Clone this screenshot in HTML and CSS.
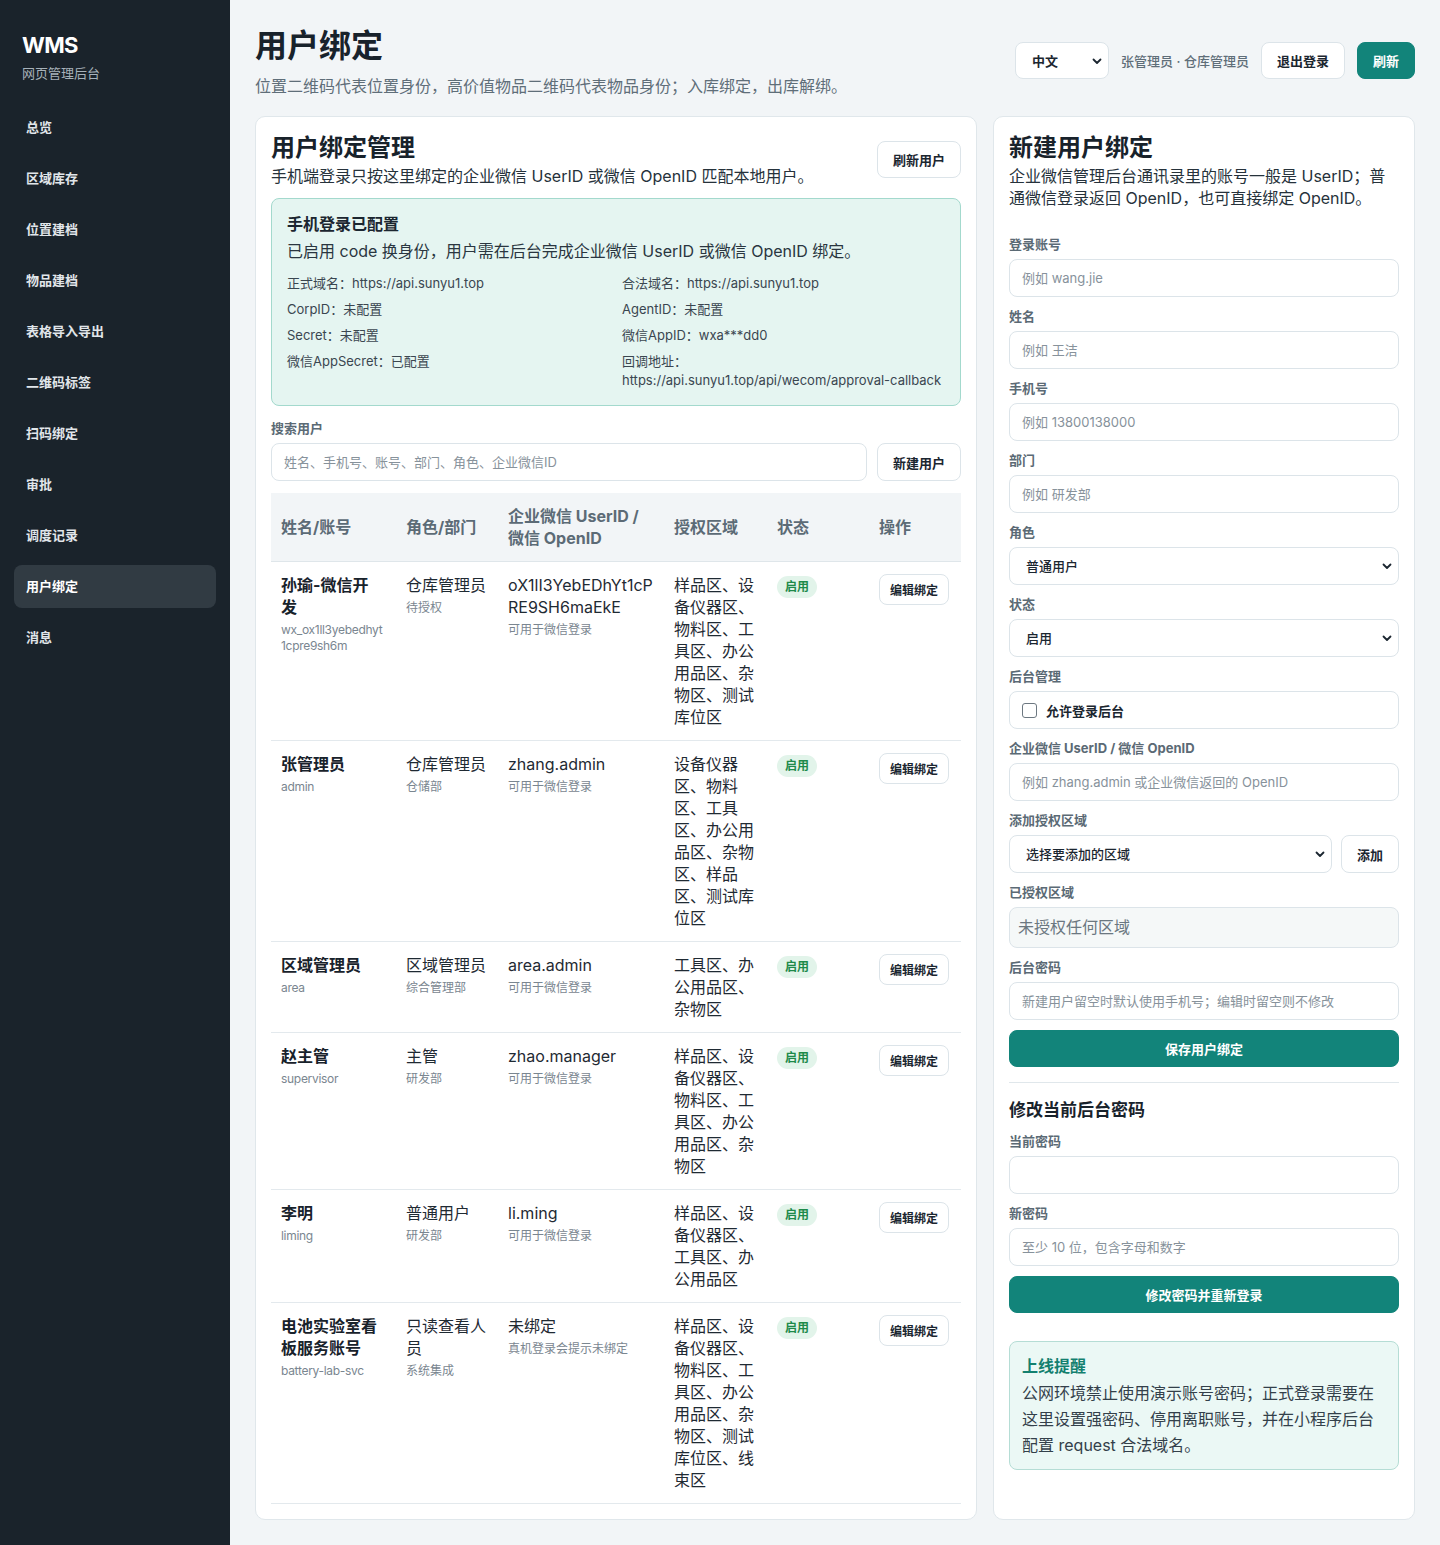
FILE: index.html
```html
<!DOCTYPE html>
<html lang="zh-CN">
<head>
<meta charset="utf-8">
<title>WMS 用户绑定</title>
<link rel="stylesheet" href="styles.css">
</head>
<body>
<div class="layout">
  <aside class="sidebar">
    <div class="brand">
      <div class="brand-name">WMS</div>
      <div class="brand-sub">网页管理后台</div>
    </div>
    <nav class="nav">
      <a class="nav-item">总览</a>
      <a class="nav-item">区域库存</a>
      <a class="nav-item">位置建档</a>
      <a class="nav-item">物品建档</a>
      <a class="nav-item">表格导入导出</a>
      <a class="nav-item">二维码标签</a>
      <a class="nav-item">扫码绑定</a>
      <a class="nav-item">审批</a>
      <a class="nav-item">调度记录</a>
      <a class="nav-item active">用户绑定</a>
      <a class="nav-item">消息</a>
    </nav>
  </aside>

  <main class="main">
    <header class="topbar">
      <div class="page-head">
        <h1>用户绑定</h1>
        <p>位置二维码代表位置身份，高价值物品二维码代表物品身份；入库绑定，出库解绑。</p>
      </div>
      <div class="top-actions">
        <div class="select select-lang">
          <select><option>中文</option></select>
          <svg class="chev" width="12" height="12" viewBox="0 0 12 12"><path d="M2.5 4.5 6 8l3.5-3.5" fill="none" stroke="#1b2630" stroke-width="1.8" stroke-linecap="round" stroke-linejoin="round"/></svg>
        </div>
        <span class="who">张管理员 · 仓库管理员</span>
        <button class="btn">退出登录</button>
        <button class="btn btn-primary">刷新</button>
      </div>
    </header>

    <div class="content">
      <section class="card">
        <div class="card-head">
          <div>
            <h2 class="card-title">用户绑定管理</h2>
            <p class="card-desc">手机端登录只按这里绑定的企业微信 UserID 或微信 OpenID 匹配本地用户。</p>
          </div>
          <button class="btn">刷新用户</button>
        </div>

        <div class="notice">
          <div class="notice-title">手机登录已配置</div>
          <div class="notice-desc">已启用 code 换身份，用户需在后台完成企业微信 UserID 或微信 OpenID 绑定。</div>
          <div class="notice-grid">
            <div>正式域名：https://api.sunyu1.top</div>
            <div>合法域名：https://api.sunyu1.top</div>
            <div>CorpID：未配置</div>
            <div>AgentID：未配置</div>
            <div>Secret：未配置</div>
            <div>微信AppID：wxa***dd0</div>
            <div>微信AppSecret：已配置</div>
            <div>回调地址：<span class="url">https://api.sunyu1.top/api/wecom/approval-callback</span></div>
          </div>
        </div>

        <div class="search">
          <label class="field-label">搜索用户</label>
          <div class="search-row">
            <input class="input" placeholder="姓名、手机号、账号、部门、角色、企业微信ID">
            <button class="btn btn-field">新建用户</button>
          </div>
        </div>

        <table class="table">
          <colgroup>
            <col style="width:125px"><col style="width:102px"><col style="width:166px"><col style="width:103px"><col style="width:102px"><col style="width:92px">
          </colgroup>
          <thead>
            <tr>
              <th>姓名/账号</th>
              <th>角色/部门</th>
              <th>企业微信 UserID / 微信 OpenID</th>
              <th>授权区域</th>
              <th>状态</th>
              <th>操作</th>
            </tr>
          </thead>
          <tbody>
            <tr>
              <td><div class="name">孙瑜-微信开发</div><div class="sub break">wx_ox1ll3yebedhyt1cpre9sh6m</div></td>
              <td><div>仓库管理员</div><div class="sub">待授权</div></td>
              <td><div class="break">oX1lI3YebEDhYt1cPRE9SH6maEkE</div><div class="sub">可用于微信登录</div></td>
              <td>样品区、设备仪器区、物料区、工具区、办公用品区、杂物区、测试库位区</td>
              <td><span class="badge">启用</span></td>
              <td><button class="btn btn-sm">编辑绑定</button></td>
            </tr>
            <tr>
              <td><div class="name">张管理员</div><div class="sub">admin</div></td>
              <td><div>仓库管理员</div><div class="sub">仓储部</div></td>
              <td><div>zhang.admin</div><div class="sub">可用于微信登录</div></td>
              <td>设备仪器区、物料区、工具区、办公用品区、杂物区、样品区、测试库位区</td>
              <td><span class="badge">启用</span></td>
              <td><button class="btn btn-sm">编辑绑定</button></td>
            </tr>
            <tr>
              <td><div class="name">区域管理员</div><div class="sub">area</div></td>
              <td><div>区域管理员</div><div class="sub">综合管理部</div></td>
              <td><div>area.admin</div><div class="sub">可用于微信登录</div></td>
              <td>工具区、办公用品区、杂物区</td>
              <td><span class="badge">启用</span></td>
              <td><button class="btn btn-sm">编辑绑定</button></td>
            </tr>
            <tr>
              <td><div class="name">赵主管</div><div class="sub">supervisor</div></td>
              <td><div>主管</div><div class="sub">研发部</div></td>
              <td><div>zhao.manager</div><div class="sub">可用于微信登录</div></td>
              <td>样品区、设备仪器区、物料区、工具区、办公用品区、杂物区</td>
              <td><span class="badge">启用</span></td>
              <td><button class="btn btn-sm">编辑绑定</button></td>
            </tr>
            <tr>
              <td><div class="name">李明</div><div class="sub">liming</div></td>
              <td><div>普通用户</div><div class="sub">研发部</div></td>
              <td><div>li.ming</div><div class="sub">可用于微信登录</div></td>
              <td>样品区、设备仪器区、工具区、办公用品区</td>
              <td><span class="badge">启用</span></td>
              <td><button class="btn btn-sm">编辑绑定</button></td>
            </tr>
            <tr>
              <td><div class="name">电池实验室看板服务账号</div><div class="sub">battery-lab-svc</div></td>
              <td><div>只读查看人员</div><div class="sub">系统集成</div></td>
              <td><div>未绑定</div><div class="sub">真机登录会提示未绑定</div></td>
              <td>样品区、设备仪器区、物料区、工具区、办公用品区、杂物区、测试库位区、线束区</td>
              <td><span class="badge">启用</span></td>
              <td><button class="btn btn-sm">编辑绑定</button></td>
            </tr>
          </tbody>
        </table>
      </section>

      <section class="card form-card">
        <h2 class="card-title">新建用户绑定</h2>
        <p class="card-desc">企业微信管理后台通讯录里的账号一般是 UserID；普通微信登录返回 OpenID，也可直接绑定 OpenID。</p>

        <div class="form">
          <div class="field">
            <label class="field-label">登录账号</label>
            <input class="input" placeholder="例如 wang.jie">
          </div>
          <div class="field">
            <label class="field-label">姓名</label>
            <input class="input" placeholder="例如 王洁">
          </div>
          <div class="field">
            <label class="field-label">手机号</label>
            <input class="input" placeholder="例如 13800138000">
          </div>
          <div class="field">
            <label class="field-label">部门</label>
            <input class="input" placeholder="例如 研发部">
          </div>
          <div class="field">
            <label class="field-label">角色</label>
            <div class="select">
              <select><option>普通用户</option></select>
              <svg class="chev" width="12" height="12" viewBox="0 0 12 12"><path d="M2.5 4.5 6 8l3.5-3.5" fill="none" stroke="#1b2630" stroke-width="1.8" stroke-linecap="round" stroke-linejoin="round"/></svg>
            </div>
          </div>
          <div class="field">
            <label class="field-label">状态</label>
            <div class="select">
              <select><option>启用</option></select>
              <svg class="chev" width="12" height="12" viewBox="0 0 12 12"><path d="M2.5 4.5 6 8l3.5-3.5" fill="none" stroke="#1b2630" stroke-width="1.8" stroke-linecap="round" stroke-linejoin="round"/></svg>
            </div>
          </div>
          <div class="field">
            <label class="field-label">后台管理</label>
            <label class="check-box"><input type="checkbox" class="check"><span>允许登录后台</span></label>
          </div>
          <div class="field">
            <label class="field-label">企业微信 UserID / 微信 OpenID</label>
            <input class="input" placeholder="例如 zhang.admin 或企业微信返回的 OpenID">
          </div>
          <div class="field">
            <label class="field-label">添加授权区域</label>
            <div class="area-row">
              <div class="select">
                <select><option>选择要添加的区域</option></select>
                <svg class="chev" width="12" height="12" viewBox="0 0 12 12"><path d="M2.5 4.5 6 8l3.5-3.5" fill="none" stroke="#1b2630" stroke-width="1.8" stroke-linecap="round" stroke-linejoin="round"/></svg>
              </div>
              <button class="btn btn-field">添加</button>
            </div>
          </div>
          <div class="field">
            <label class="field-label">已授权区域</label>
            <div class="area-box">未授权任何区域</div>
          </div>
          <div class="field">
            <label class="field-label">后台密码</label>
            <input class="input" placeholder="新建用户留空时默认使用手机号；编辑时留空则不修改">
          </div>
          <button class="btn btn-primary btn-block">保存用户绑定</button>
        </div>

        <hr class="divider">

        <h3 class="sub-title">修改当前后台密码</h3>
        <div class="form form-tight">
          <div class="field">
            <label class="field-label">当前密码</label>
            <input class="input" type="password">
          </div>
          <div class="field">
            <label class="field-label">新密码</label>
            <input class="input" placeholder="至少 10 位，包含字母和数字">
          </div>
          <button class="btn btn-primary btn-block">修改密码并重新登录</button>
        </div>

        <div class="tip">
          <div class="tip-title">上线提醒</div>
          <p class="tip-text">公网环境禁止使用演示账号密码；正式登录需要在这里设置强密码、停用离职账号，并在小程序后台配置 request 合法域名。</p>
        </div>
      </section>
    </div>
  </main>
</div>
</body>
</html>
```

FILE: styles.css
```css
* { box-sizing: border-box; }
html, body { margin: 0; padding: 0; }
body {
  font-family: "Inter", "Noto Sans CJK SC", sans-serif;
  color: #1b2630;
  background: #f2f5f7;
}
.layout {
  display: grid;
  grid-template-columns: 230px 1fr;
  min-height: 100vh;
}

/* Sidebar */
.sidebar {
  background: #1a232b;
  padding: 30px 14px;
}
.brand { padding-left: 8px; margin-bottom: 24px; }
.brand-name {
  color: #ffffff;
  font-size: 22px;
  line-height: 30px;
  font-weight: 700;
  letter-spacing: -0.6px;
}
.brand-sub {
  color: #a7b2ba;
  font-size: 13px;
  line-height: 18px;
  margin-top: 4px;
}
.nav { display: flex; flex-direction: column; gap: 8px; }
.nav-item {
  display: block;
  height: 43px;
  line-height: 43px;
  padding: 0 12px;
  border-radius: 8px;
  color: #e1e6ea;
  font-size: 13px;
  font-weight: 700;
  text-decoration: none;
}
.nav-item.active { background: #313b43; color: #ffffff; }

/* Main */
.main { padding: 24px 25px 25px; min-width: 0; }
.topbar {
  display: flex;
  align-items: center;
  justify-content: space-between;
  margin-bottom: 19px;
}
.page-head h1 {
  margin: 0;
  font-size: 32px;
  line-height: 44px;
  font-weight: 700;
  color: #18222b;
}
.page-head p {
  margin: 7px 0 0;
  font-size: 16px;
  line-height: 22px;
  color: #5f6e79;
}
.top-actions { display: flex; align-items: center; gap: 12px; }
.who { font-size: 13px; color: #5f6e79; font-weight: 500; }

.btn {
  height: 37px;
  padding: 0 15px;
  border: 1px solid #dce4e9;
  border-radius: 8px;
  background: #ffffff;
  font-family: inherit;
  font-size: 13px;
  font-weight: 700;
  color: #1b2630;
  white-space: nowrap;
}
.btn-primary { background: #12847a; border-color: #12847a; color: #ffffff; }
.btn-field { height: 38px; flex: 0 0 auto; }
.btn-block { width: 100%; }
.btn-sm { height: 31px; padding: 0 10px; font-size: 12px; }

/* Select */
.select { position: relative; flex: 1 1 auto; }
.select select {
  appearance: none;
  -webkit-appearance: none;
  width: 100%;
  height: 38px;
  border: 1px solid #dce4e9;
  border-radius: 8px;
  background: #ffffff;
  padding: 0 30px 0 16px;
  font-family: inherit;
  font-size: 13px;
  font-weight: 500;
  color: #1b2630;
}
.select .chev { position: absolute; right: 6px; top: 13px; pointer-events: none; }
.select-lang { flex: 0 0 94px; }
.select-lang select { height: 37px; font-weight: 700; }

/* Cards */
.content {
  display: grid;
  grid-template-columns: minmax(0, 1fr) 422px;
  gap: 16px;
  align-items: stretch;
}
.card {
  background: #ffffff;
  border: 1px solid #e0e7eb;
  border-radius: 10px;
  padding: 15px;
  min-width: 0;
}
.card-head {
  display: flex;
  align-items: center;
  justify-content: space-between;
  gap: 16px;
}
.card-title {
  margin: 0;
  font-size: 24px;
  line-height: 32px;
  font-weight: 700;
  color: #18222b;
}
.card-desc {
  margin: 1px 0 0;
  font-size: 16px;
  line-height: 22px;
  color: #26323b;
}

/* Notice */
.notice {
  margin-top: 11px;
  background: #e5f5f1;
  border: 1px solid #a3d9cd;
  border-radius: 8px;
  padding: 14px 15px 15px;
}
.notice-title { font-size: 16px; line-height: 22px; font-weight: 700; }
.notice-desc { margin-top: 5px; font-size: 16px; line-height: 22px; color: #2a3640; }
.notice-grid {
  margin-top: 12px;
  display: grid;
  grid-template-columns: 1fr 1fr;
  column-gap: 12px;
  row-gap: 7px;
  font-size: 13px;
  line-height: 19px;
  color: #3a4650;
}
.url { display: block; white-space: nowrap; }

/* Search */
.search { margin-top: 13px; }
.field-label {
  display: block;
  font-size: 13px;
  line-height: 18px;
  font-weight: 700;
  color: #5b6a75;
  margin-bottom: 6px;
}
.search-row { display: flex; gap: 10px; }
.input {
  display: block;
  width: 100%;
  height: 38px;
  border: 1px solid #dce4e9;
  border-radius: 8px;
  padding: 0 12px;
  background: #ffffff;
  font-family: inherit;
  font-size: 13px;
  color: #1b2630;
}
.input::placeholder { color: #87929b; }

/* Table */
.table {
  width: 100%;
  margin-top: 12px;
  border-collapse: collapse;
  table-layout: fixed;
}
.table th {
  background: #f2f5f7;
  text-align: left;
  font-size: 16px;
  line-height: 22px;
  font-weight: 700;
  color: #5c6b76;
  padding: 12px 10px;
  vertical-align: middle;
  border-bottom: 1px solid #dfe6ea;
}
.table td {
  padding: 12px 10px;
  vertical-align: top;
  border-bottom: 1px solid #e3e9ed;
  font-size: 16px;
  line-height: 22px;
  color: #1f2a33;
  overflow-wrap: anywhere;
}
.table td:first-child { padding-right: 13px; }
.name { font-weight: 700; color: #18222b; }
.sub {
  margin-top: 4px;
  font-size: 12px;
  line-height: 16px;
  color: #7a8690;
}
.break { word-break: break-all; }
.table td:first-child .sub { letter-spacing: -0.3px; }
.badge {
  display: inline-block;
  height: 22px;
  line-height: 22px;
  padding: 0 8px;
  border-radius: 11px;
  background: #e2f4ea;
  color: #1e8a4a;
  font-size: 12px;
  font-weight: 700;
}

/* Right form */
.form-card { display: flex; flex-direction: column; }
.form { margin-top: 26px; display: flex; flex-direction: column; gap: 10px; }
.form-tight { margin-top: 10px; }
.area-row { display: flex; gap: 9px; }
.check-box {
  display: flex;
  align-items: center;
  gap: 9px;
  height: 38px;
  border: 1px solid #dce4e9;
  border-radius: 8px;
  padding: 0 12px;
  font-size: 13px;
  font-weight: 700;
  color: #1b2630;
}
.check {
  appearance: none;
  -webkit-appearance: none;
  margin: 0;
  width: 15px;
  height: 15px;
  border: 1.5px solid #6d7881;
  border-radius: 3px;
  background: #fff;
}
.area-box {
  height: 41px;
  line-height: 39px;
  border: 1px solid #dce4e9;
  border-radius: 8px;
  background: #f5f8f8;
  padding: 0 8px;
  font-size: 16px;
  color: #6b7780;
}
.divider {
  border: 0;
  border-top: 1px solid #e0e7eb;
  margin: 15px 0 0;
}
.sub-title {
  margin: 15px 0 0;
  font-size: 17px;
  line-height: 24px;
  font-weight: 700;
  color: #18222b;
}
.tip {
  margin-top: 28px;
  background: #ebf8f5;
  border: 1px solid #b5ddd5;
  border-radius: 8px;
  padding: 12px 12px 11px;
}
.tip-title { font-size: 16px; line-height: 24px; font-weight: 700; color: #13806f; }
.tip-text { margin: 2px 0 0; font-size: 16px; line-height: 26px; color: #33404a; }
```
